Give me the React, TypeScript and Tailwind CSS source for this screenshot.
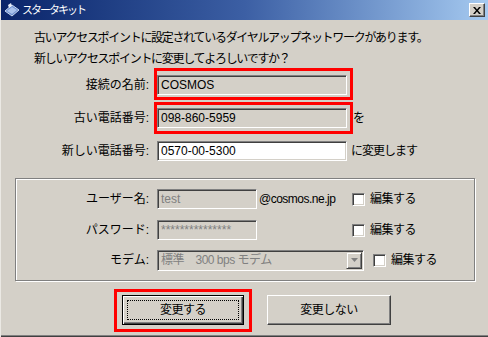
const JP = "font-['Liberation_Sans','Noto_Sans_CJK_JP',sans-serif]";

// sunken edit box, Windows classic
const sunken =
  "border border-t-[#808080] border-l-[#808080] border-b-white border-r-white shadow-[inset_1px_1px_0_#404040,inset_-1px_-1px_0_#d4d0c8]";

function Field({
  value,
  width,
  disabled,
  white,
}: {
  value: string;
  width: string;
  disabled?: boolean;
  white?: boolean;
}) {
  return (
    <div
      className={`${sunken} ${width} h-[20px] flex items-center pl-[3px] text-[12px] ${
        white ? "bg-white" : "bg-[#d4d0c8]"
      } ${disabled ? "text-[#808080]" : "text-black"}`}
    >
      {value}
    </div>
  );
}

function Check({ label }: { label: string }) {
  return (
    <div className="flex items-center">
      <div className={`${sunken} w-[13px] h-[13px] bg-white`} />
      <span className="ml-[5px] tracking-[-0.5px]">{label}</span>
    </div>
  );
}

function Label({ text, w }: { text: string; w: string }) {
  return <div className={`${w} text-right shrink-0`}>{text}</div>;
}

export default function App() {
  return (
    <div
      className={`${JP} w-[488px] h-[337px] bg-[#d4d0c8] text-[12px] text-black relative overflow-hidden flex flex-col border-l border-l-[#ebe9e4]`}
    >
      {/* title bar */}
      <div className="h-[20px] shrink-0 flex items-center bg-gradient-to-r from-[#0a246a] via-[#3c5fa4] to-[#a6caf0]">
        <svg width="18" height="16" viewBox="0 0 18 16" className="ml-[2px]">
          <polygon points="2,9 9,3 16,8 9,14" fill="#6f8fd0" stroke="#c8d8f0" strokeWidth="1" />
          <polygon points="4,9 9,5 14,8 9,12" fill="#a9c2ec" />
          <polygon points="5,3 8,1 9,4 6,6" fill="#e8eef8" />
        </svg>
        <span className="ml-[1px] text-white text-[11px] tracking-[-2px]">スタータキット</span>
        <div className="ml-auto mr-[3px] w-[16px] h-[14px] bg-[#d4d0c8] border border-t-white border-l-white border-b-[#404040] border-r-[#404040] shadow-[inset_-1px_-1px_0_#808080] flex items-center justify-center">
          <svg width="8" height="7" viewBox="0 0 8 7">
            <path d="M0 0h2l2 2.5L6 0h2L5 3.5 8 7H6L4 4.5 2 7H0l3-3.5z" fill="#000" />
          </svg>
        </div>
      </div>

      {/* message */}
      <div className="pl-[33px] pt-[8px] leading-[21px] tracking-[-1.3px]">
        <div>古いアクセスポイントに設定されているダイヤルアップネットワークがあります。</div>
        <div>新しいアクセスポイントに変更してよろしいですか？</div>
      </div>

      {/* connection rows */}
      <div className="mt-[5px] flex flex-col">
        <div className="flex items-center h-[20px]">
          <Label text="接続の名前:" w="w-[148px]" />
          <div className="relative ml-[8px]">
            <Field value="COSMOS" width="w-[190px]" />
            <div className="absolute -left-[3px] -right-[6px] -top-[7px] -bottom-[5px] border-[3px] border-[#ff0000]" />
          </div>
        </div>
        <div className="flex items-center h-[20px] mt-[13px]">
          <Label text="古い電話番号:" w="w-[148px]" />
          <div className="relative ml-[8px]">
            <Field value="098-860-5959" width="w-[190px]" />
            <div className="absolute -left-[3px] -right-[6px] -top-[6px] -bottom-[6px] border-[3px] border-[#ff0000]" />
          </div>
          <span className="ml-[6px]">を</span>
        </div>
        <div className="flex items-center h-[20px] mt-[13px]">
          <Label text="新しい電話番号:" w="w-[148px]" />
          <div className="ml-[8px]">
            <Field value="0570-00-5300" width="w-[190px]" white />
          </div>
          <span className="ml-[4px] tracking-[-1px]">に変更します</span>
        </div>
      </div>

      {/* account group */}
      <div className="mt-[17px] ml-[14px] w-[460px] h-[103px] border border-[#808080] shadow-[inset_1px_1px_0_#fff,1px_1px_0_#fff] flex flex-col pt-[10px]">
        <div className="flex items-center h-[20px]">
          <Label text="ユーザー名:" w="w-[133px]" />
          <div className="ml-[8px] w-[195px] flex items-center">
            <Field value="test" width="w-[100px]" disabled />
            <span className="ml-[2px] tracking-[-0.5px]">@cosmos.ne.jp</span>
          </div>
          <Check label="編集する" />
        </div>
        <div className="flex items-center h-[20px] mt-[11px]">
          <Label text="パスワード:" w="w-[133px]" />
          <div className="ml-[8px] w-[195px] flex items-center">
            <Field value="***************" width="w-[100px]" disabled />
          </div>
          <Check label="編集する" />
        </div>
        <div className="flex items-center h-[20px] mt-[10px]">
          <Label text="モデム:" w="w-[133px]" />
          <div className={`ml-[8px] ${sunken} w-[207px] h-[21px] bg-[#d4d0c8] flex items-center text-[#808080]`}>
            <span className="pl-[3px] tracking-[-0.5px] whitespace-pre">標準　300 bps モデム</span>
            <div className="ml-auto mr-[1px] w-[16px] h-[17px] border border-t-[#d4d0c8] border-l-[#d4d0c8] border-b-[#404040] border-r-[#404040] shadow-[inset_1px_1px_0_#fff,inset_-1px_-1px_0_#808080] flex items-center justify-center">
              <svg width="7" height="4" viewBox="0 0 7 4">
                <path d="M0 0h7L3.5 4z" fill="#808080" />
              </svg>
            </div>
          </div>
          <div className="ml-[9px]">
            <Check label="編集する" />
          </div>
        </div>
      </div>

      {/* buttons */}
      <div className="mt-[14px] flex">
        <div className="relative ml-[121px]">
          <div className="w-[122px] h-[30px] border border-black bg-[#d4d0c8] shadow-[inset_1px_1px_0_#fff,inset_-1px_-1px_0_#404040,inset_-2px_-2px_0_#808080] flex items-center justify-center p-[4px]">
            <div className="w-full h-full border border-dotted border-black flex items-center justify-center tracking-[-0.5px]">
              変更する
            </div>
          </div>
          <div className="absolute -left-[8px] -right-[8px] -top-[6px] -bottom-[7px] border-[3px] border-[#ff0000]" />
        </div>
        <div className="ml-[23px] w-[124px] h-[30px] bg-[#d4d0c8] border border-t-white border-l-white border-b-[#404040] border-r-[#404040] shadow-[inset_-1px_-1px_0_#808080] flex items-center justify-center tracking-[-0.5px]">
          変更しない
        </div>
      </div>

      <div className="absolute left-0 right-0 bottom-0 h-[2px] bg-[#808080] border-b border-b-[#404040]" />
    </div>
  );
}
